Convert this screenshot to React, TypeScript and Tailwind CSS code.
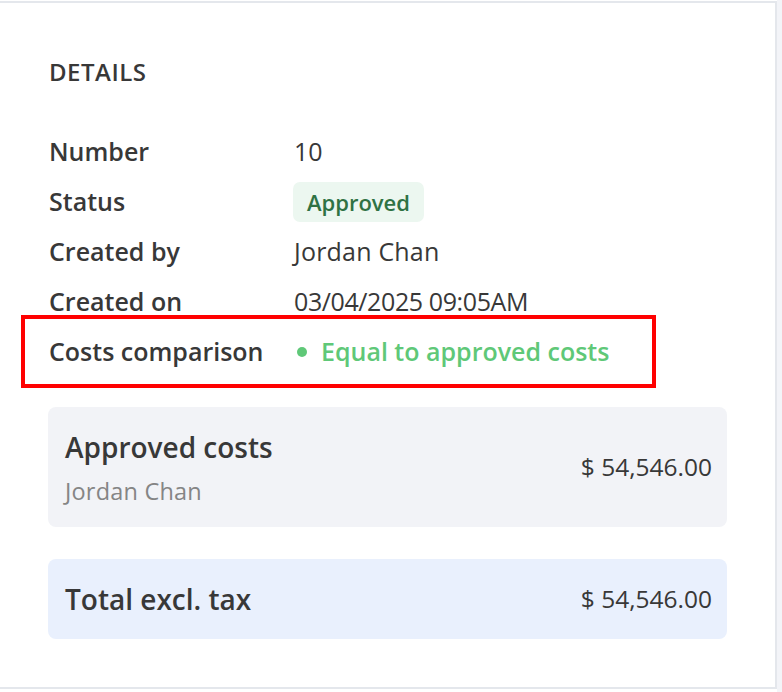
import React from "react";

export default function App() {
  return (
    <div
      className="flex h-[692px] w-full bg-white text-[#383838]"
      style={{ fontFamily: "'Open Sans', Lato, sans-serif" }}
    >
      <div className="mt-[1px] h-[688px] w-[777px] shrink-0 border-t-2 border-r-2 border-b-2 border-[#e4e7ec] bg-white">
        <div className="pl-[49px] pr-[49px] pt-[51px]">
          <div className="h-[36px] text-[24px] font-semibold uppercase leading-[36px] tracking-[0.5px]">
            Details
          </div>
          <div className="mt-[37px] flex flex-col text-[25px]">
            <div className="flex h-[50px] items-center">
              <div className="w-[245px] font-semibold">Number</div>
              <div>10</div>
            </div>
            <div className="flex h-[50px] items-center">
              <div className="w-[245px] font-semibold">Status</div>
              <div className="-ml-[1px] flex h-[40px] items-center rounded-[7px] bg-[#ecf7f0] px-[14px] text-[22px] font-semibold text-[#2f7244]">
                Approved
              </div>
            </div>
            <div className="flex h-[50px] items-center">
              <div className="w-[245px] font-semibold">Created by</div>
              <div className="tracking-[0.2px]">Jordan Chan</div>
            </div>
            <div className="flex h-[50px] items-center">
              <div className="w-[245px] font-semibold">Created on</div>
              <div className="tracking-[-0.4px]">03/04/2025 09:05AM</div>
            </div>
            <div className="relative flex h-[50px] items-center">
              <div className="pointer-events-none absolute top-[-12px] bottom-[-11px] left-[-28px] w-[635px] border-[4px] border-[#ff0000]" />
              <div className="w-[245px] font-semibold">Costs comparison</div>
              <div className="flex items-center gap-[14px] font-semibold text-[#5fc878]">
                <span className="ml-[3px] inline-block h-[10px] w-[10px] rounded-full bg-[#5fc878]" />
                <span>Equal to approved costs</span>
              </div>
            </div>
          </div>
        </div>
        <div className="mt-[30px] px-[48px]">
          <div className="flex h-[120px] items-center justify-between rounded-[8px] bg-[#f2f3f7] pl-[17px] pr-[15px]">
            <div className="flex flex-col">
              <div className="text-[28px] font-semibold leading-[38px]">Approved costs</div>
              <div className="mt-[10px] text-[23.5px] leading-[30px] tracking-[0.2px] text-[#858585]">Jordan Chan</div>
            </div>
            <div className="text-[24.5px]">$ 54,546.00</div>
          </div>
          <div className="mt-[32px] flex h-[80px] items-center justify-between rounded-[8px] bg-[#e9f0fd] pl-[17px] pr-[15px]">
            <div className="text-[28px] font-semibold">Total excl. tax</div>
            <div className="text-[24.5px]">$ 54,546.00</div>
          </div>
        </div>
      </div>
      <div className="h-full flex-1 bg-[#f3f4f8]" />
    </div>
  );
}
